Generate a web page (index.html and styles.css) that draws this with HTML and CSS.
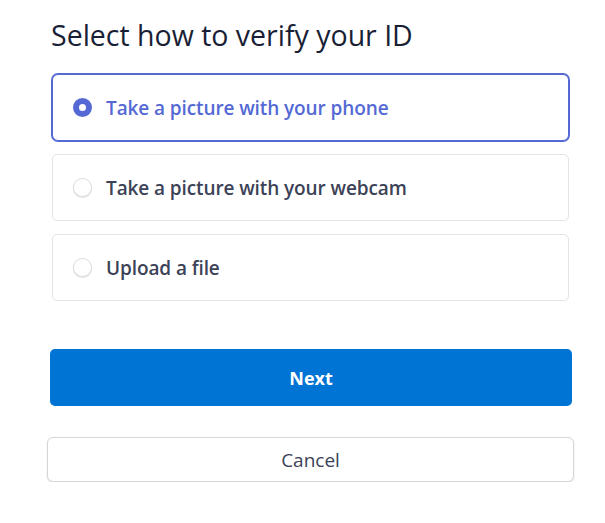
FILE: index.html
```html
<!DOCTYPE html>
<html lang="en">
<head>
<meta charset="utf-8">
<title>Select how to verify your ID</title>
<link rel="stylesheet" href="styles.css">
</head>
<body>
<main class="page">
  <h1 class="title">Select how to verify your ID</h1>
  <div class="options">
    <label class="option option-selected">
      <span class="radio radio-on"></span>
      <span class="option-text">Take a picture with your phone</span>
    </label>
    <label class="option">
      <span class="radio"></span>
      <span class="option-text">Take a picture with your webcam</span>
    </label>
    <label class="option">
      <span class="radio"></span>
      <span class="option-text">Upload a file</span>
    </label>
  </div>
  <div class="actions">
    <button class="btn btn-primary">Next</button>
    <button class="btn btn-secondary">Cancel</button>
  </div>
</main>
</body>
</html>
```

FILE: styles.css
```css
html, body {
  margin: 0;
  padding: 0;
  background: #ffffff;
}
body {
  font-family: "Open Sans", "Noto Sans", "Liberation Sans", sans-serif;
}
.page {
  padding: 15px 0 0 51px;
  width: 523px;
}
.title {
  margin: 0;
  font-size: 28.5px;
  font-weight: 400;
  line-height: 40px;
  color: #1a1f36;
  letter-spacing: 0;
}
.options {
  display: flex;
  flex-direction: column;
  gap: 13px;
  margin-top: 19px;
  padding-left: 1px;
  width: 517px;
}
.option {
  display: flex;
  align-items: center;
  gap: 14px;
  height: 65px;
  padding: 0 20px;
  border: 1px solid #e3e3e8;
  border-radius: 5px;
  background: #fff;
}
.option-selected {
  border-color: #5469d4;
  box-shadow: 0 0 0 1px #5469d4;
  border-radius: 6px;
}
.option-text {
  font-size: 19px;
  font-weight: 600;
  color: #3c4257;
  letter-spacing: -0.1px;
}
.option-selected .option-text {
  color: #5469d4;
}
.radio {
  width: 17px;
  height: 17px;
  border-radius: 50%;
  border: 1px solid #dedee3;
  box-shadow: 0 1px 1px rgba(0, 0, 0, 0.12);
  background: #fff;
  box-sizing: content-box;
  flex: none;
}
.radio-on {
  width: 7px;
  height: 7px;
  border: 6px solid #5469d4;
  box-shadow: none;
}
.actions {
  display: flex;
  flex-direction: column;
  margin-top: 48px;
}
.btn {
  font-family: inherit;
  cursor: pointer;
}
.btn-primary {
  margin-left: -1px;
  width: 522px;
  height: 57px;
  border: none;
  border-radius: 5px;
  background: #0074d4;
  color: #fff;
  font-size: 18px;
  font-weight: 700;
}
.btn-secondary {
  margin-top: 31px;
  margin-left: -4px;
  width: 527px;
  height: 45px;
  border: 1px solid #d5d5db;
  border-radius: 6px;
  background: #fff;
  color: #3c4257;
  font-size: 19px;
  font-weight: 500;
  box-shadow: 0 1px 2px rgba(0, 0, 0, 0.12);
}
```
